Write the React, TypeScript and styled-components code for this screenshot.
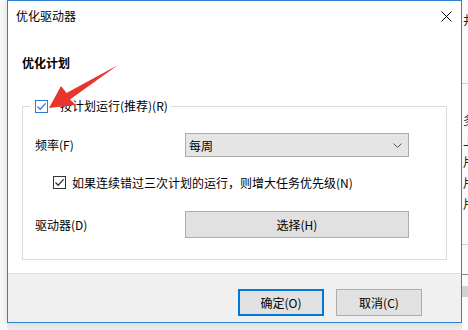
import React from "react";
import styled, { createGlobalStyle } from "styled-components";

const Global = createGlobalStyle`
  html, body { margin: 0; padding: 0; background: #eeeeee; }
  body { font-family: "Noto Sans CJK SC", "Noto Sans", sans-serif; font-size: 12px; color: #000; }
  * { box-sizing: border-box; }
`;

const Desktop = styled.div`
  position: relative;
  display: flex;
  align-items: flex-start;
  width: 468px;
  height: 330px;
  overflow: hidden;
  background: #ececec;
`;

const LeftEdge = styled.div`
  width: 7px;
  align-self: stretch;
  background: #f7f7f7;
`;

const RightApp = styled.div`
  flex: 1;
  align-self: stretch;
  display: flex;
  flex-direction: column;
  overflow: hidden;
  background: #fbfbfb;
`;

const Gap = styled.div<{ $h: number }>`
  height: ${(p) => p.$h}px;
  flex: none;
`;

const HLine = styled.div<{ $c?: string; $h?: number }>`
  height: ${(p) => p.$h ?? 1}px;
  flex: none;
  background: ${(p) => p.$c ?? "#cfcfcf"};
`;

const AppChar = styled.div<{ $lh: number }>`
  flex: none;
  height: ${(p) => p.$lh}px;
  line-height: ${(p) => p.$lh}px;
  font-size: 12px;
  white-space: nowrap;
  padding-left: 1px;
  color: #222;
`;

const Window = styled.div`
  flex: none;
  width: 455px;
  height: 323px;
  border: 1px solid #2f80d1;
  background: #fff;
  display: flex;
  flex-direction: column;
  box-shadow: 0 0 6px rgba(0, 0, 0, 0.12);
`;

const TitleBar = styled.div`
  height: 30px;
  flex: none;
  display: flex;
  align-items: center;
  justify-content: space-between;
  padding-left: 8px;
`;

const Title = styled.span`
  font-size: 12px;
  line-height: 16px;
  color: #000;
`;

const CloseBtn = styled.div`
  width: 30px;
  height: 30px;
  display: flex;
  align-items: center;
  justify-content: center;
`;

const Body = styled.div`
  flex: 1;
  padding: 24px 14px 0 14px;
  display: flex;
  flex-direction: column;
`;

const Heading = styled.div`
  font-weight: bold;
  font-size: 12px;
  line-height: 16px;
  height: 16px;
`;

const Group = styled.fieldset`
  margin: 28px 0 0 0;
  padding: 0;
  border: 1px solid #dcdcdc;
  min-inline-size: 0;
`;

const Legend = styled.legend`
  margin-left: 7px;
  padding: 0 3px 0 5px;
  height: 14px;
  line-height: 14px;
`;

const LegendInner = styled.span`
  display: inline-flex;
  align-items: center;
  gap: 12px;
  height: 14px;
`;

const Rows = styled.div`
  display: flex;
  flex-direction: column;
  padding: 20px 0 21px 12px;
`;

const FieldRow = styled.div<{ $h: number; $mt?: number }>`
  display: flex;
  align-items: center;
  height: ${(p) => p.$h}px;
  margin-top: ${(p) => p.$mt ?? 0}px;
`;

const FieldLabel = styled.span`
  width: 150px;
  flex: none;
  line-height: 16px;
`;

const Select = styled.div`
  width: 224px;
  height: 24px;
  border: 1px solid #acacac;
  background: #e5e5e5;
  display: flex;
  align-items: center;
  justify-content: space-between;
  padding: 0 6px 0 3px;
`;

const CheckRow = styled.div`
  display: flex;
  align-items: center;
  gap: 6px;
  height: 13px;
  margin-top: 19px;
  padding-left: 18px;
`;

const Box = styled.span<{ $blue?: boolean }>`
  width: 13px;
  height: 13px;
  flex: none;
  border: 1px solid ${(p) => (p.$blue ? "#2b7fd3" : "#333333")};
  background: #fff;
  display: flex;
  align-items: center;
  justify-content: center;
`;

const WideButton = styled.div`
  width: 224px;
  height: 27px;
  border: 1px solid #adadad;
  background: #e1e1e1;
  display: flex;
  align-items: center;
  justify-content: center;
`;

const Footer = styled.div`
  height: 49px;
  flex: none;
  border-top: 1px solid #dfdfdf;
  background: #f0f0f0;
  display: flex;
  justify-content: flex-end;
  align-items: flex-start;
  gap: 12px;
  padding: 15px 39px 0 0;
`;

const DlgButton = styled.div<{ $default?: boolean }>`
  width: 86px;
  height: 27px;
  background: #e1e1e1;
  border: ${(p) => (p.$default ? "2px solid #0078d7" : "1px solid #adadad")};
  display: flex;
  align-items: center;
  justify-content: center;
`;

const Overlay = styled.svg`
  position: absolute;
  left: 0;
  top: 0;
  pointer-events: none;
`;

const Check = ({ color }: { color: string }) => (
  <svg width="11" height="11" viewBox="0 0 11 11">
    <polyline points="1.5,5.5 4.2,8.3 9.6,2.4" fill="none" stroke={color} strokeWidth="1.3" />
  </svg>
);

export default function App() {
  return (
    <>
      <Global />
      <Desktop>
        <LeftEdge />
        <Window>
          <TitleBar>
            <Title>优化驱动器</Title>
            <CloseBtn>
              <svg width="11" height="11" viewBox="0 0 11 11">
                <path d="M0.5 0.5 L10.5 10.5 M10.5 0.5 L0.5 10.5" stroke="#000" strokeWidth="1" fill="none" />
              </svg>
            </CloseBtn>
          </TitleBar>
          <Body>
            <Heading>优化计划</Heading>
            <Group>
              <Legend>
                <LegendInner>
                  <Box $blue>
                    <Check color="#2b7fd3" />
                  </Box>
                  <span>按计划运行(推荐)(R)</span>
                </LegendInner>
              </Legend>
              <Rows>
                <FieldRow $h={24}>
                  <FieldLabel>频率(F)</FieldLabel>
                  <Select>
                    <span>每周</span>
                    <svg width="9" height="5" viewBox="0 0 9 5">
                      <polyline points="0.5,0.5 4.5,4.5 8.5,0.5" fill="none" stroke="#555" strokeWidth="1" />
                    </svg>
                  </Select>
                </FieldRow>
                <CheckRow>
                  <Box>
                    <Check color="#333" />
                  </Box>
                  <span>如果连续错过三次计划的运行，则增大任务优先级(N)</span>
                </CheckRow>
                <FieldRow $h={27} $mt={22}>
                  <FieldLabel>驱动器(D)</FieldLabel>
                  <WideButton>选择(H)</WideButton>
                </FieldRow>
              </Rows>
            </Group>
          </Body>
          <Footer>
            <DlgButton $default>确定(O)</DlgButton>
            <DlgButton>取消(C)</DlgButton>
          </Footer>
        </Window>
        <RightApp>
          <Gap $h={12} />
          <AppChar $lh={16}>井</AppChar>
          <Gap $h={55} />
          <HLine />
          <Gap $h={25} />
          <AppChar $lh={21}>多</AppChar>
          <AppChar $lh={21}>上</AppChar>
          <AppChar $lh={21}>片</AppChar>
          <AppChar $lh={21}>片</AppChar>
          <AppChar $lh={21}>片</AppChar>
          <Gap $h={30} />
          <HLine />
          <Gap $h={29} />
          <HLine $c="#8a8a8a" />
          <Gap $h={11} />
          <HLine $c="#d2d2d2" $h={11} />
        </RightApp>
        <Overlay width="468" height="330" viewBox="0 0 468 330">
          <polygon
            points="49,108 61,86 66.5,93 118,65 70,99.5 76,105"
            fill="#e8352e"
          />
        </Overlay>
      </Desktop>
    </>
  );
}
